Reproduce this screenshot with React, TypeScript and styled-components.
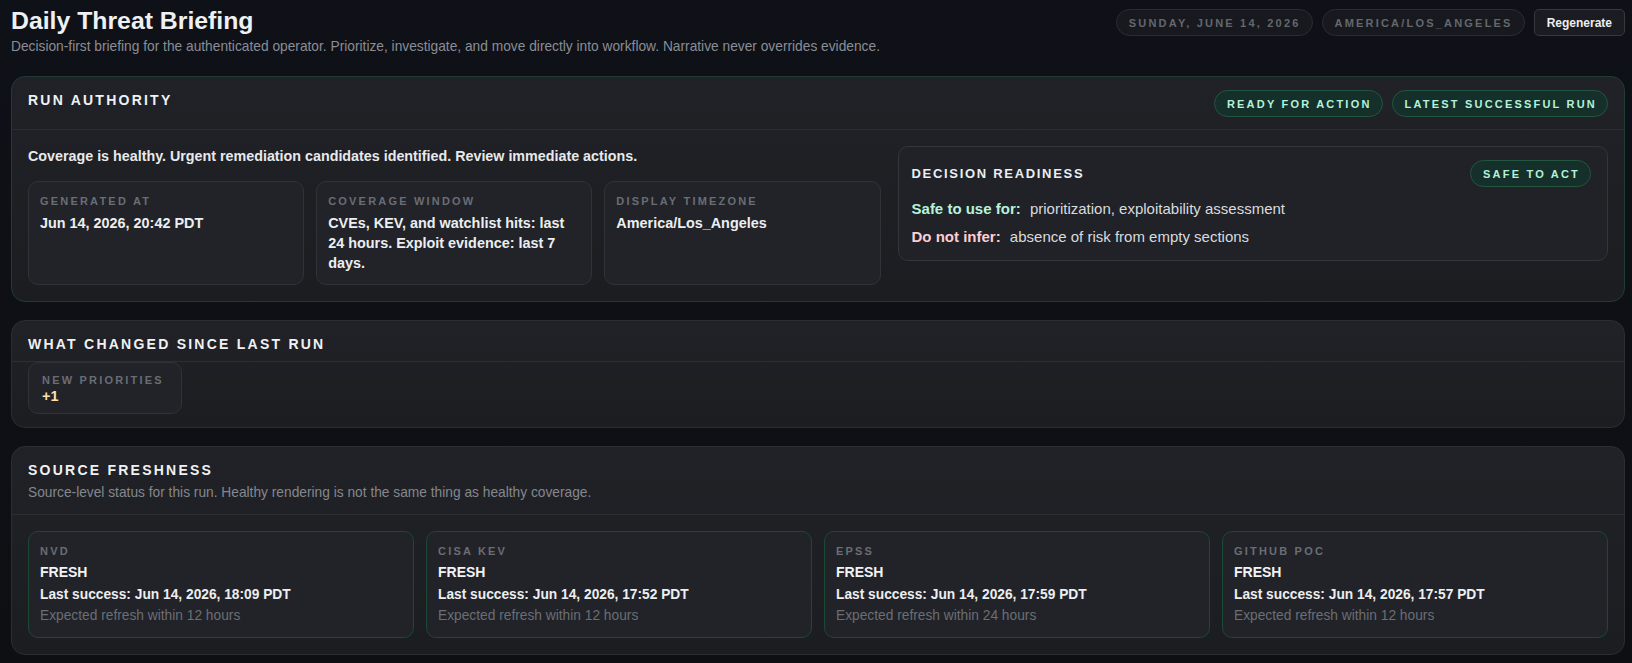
import React from 'react'
import styled, { createGlobalStyle } from 'styled-components'

const GlobalStyle = createGlobalStyle`
  html, body {
    margin: 0;
    padding: 0;
    background: #0e1015;
  }
  body {
    font-family: 'Liberation Sans', Arial, sans-serif;
    color: #e6e7ea;
  }
  * {
    box-sizing: border-box;
  }
`

const Page = styled.div`
  min-height: 663px;
  padding: 0 7px 12px 11px;
  background: linear-gradient(180deg, #0f1118 0%, #0d0f13 100%);
`

const Header = styled.header`
  display: flex;
  justify-content: space-between;
  align-items: flex-start;
  margin-bottom: 20px;
`

const TitleBlock = styled.div`
  padding-top: 7px;
`

const PageTitle = styled.h1`
  margin: 0;
  font-size: 24.8px;
  line-height: 28px;
  font-weight: 700;
  color: #eef0f3;
`

const PageSubtitle = styled.p`
  margin: 3px 0 0;
  font-size: 13.76px;
  line-height: 18px;
  color: #8a8d95;
`

const HeaderActions = styled.div`
  display: flex;
  align-items: center;
  gap: 9px;
  padding-top: 9px;
`

const Pill = styled.span`
  display: inline-flex;
  align-items: center;
  height: 27px;
  padding: 0 11px 0 12px;
  border-radius: 999px;
  border: 1px solid #2a2d34;
  background: #17191e;
  color: #64676e;
  font-size: 11px;
  font-weight: 700;
  letter-spacing: 0.2em;
`

const Button = styled.button`
  height: 27px;
  padding: 0 12px;
  border-radius: 5px;
  border: 1px solid #363940;
  background: #1a1c21;
  color: #eceef1;
  font-family: inherit;
  font-size: 12px;
  font-weight: 700;
`

const Stack = styled.div`
  display: flex;
  flex-direction: column;
  gap: 18px;
`

const Card = styled.section<{ $tone?: 'authority' | 'neutral' }>`
  border-radius: 14px;
  border: 1px solid ${(p) => (p.$tone === 'authority' ? '#1f3d33' : '#2b2d33')};
  background: linear-gradient(180deg, #202227 0%, #1b1d21 100%);
`

const CardHeader = styled.div<{ $pb?: number }>`
  display: flex;
  justify-content: space-between;
  align-items: flex-start;
  padding: 13px 16px ${(p) => p.$pb ?? 12}px;
  border-bottom: 1px solid #2c2e34;
`

const SectionTitle = styled.h2`
  margin: 0;
  font-size: 14px;
  line-height: 20px;
  font-weight: 700;
  letter-spacing: 0.16em;
  color: #f0f1f3;
`

const SectionNote = styled.p`
  margin: 3px 0 0;
  font-size: 13.76px;
  line-height: 20px;
  color: #84878f;
`

const BadgeRow = styled.div`
  display: flex;
  gap: 9px;
`

const Badge = styled.span`
  display: inline-flex;
  align-items: center;
  height: 27px;
  padding: 0 10px 0 12px;
  border-radius: 999px;
  border: 1px solid #24553f;
  background: #15302a;
  color: #b4f2d9;
  font-size: 11px;
  font-weight: 700;
  letter-spacing: 0.2em;
`

const CardBody = styled.div<{ $pt?: number; $pb?: number }>`
  padding: ${(p) => p.$pt ?? 16}px 16px ${(p) => p.$pb ?? 16}px;
`

const AuthorityGrid = styled.div`
  display: grid;
  grid-template-columns: 1.2fr 1fr;
  gap: 17px;
  align-items: start;
`

const Summary = styled.p`
  margin: 0 0 15px;
  font-size: 14.3px;
  line-height: 20px;
  font-weight: 700;
  color: #e8e9ec;
`

const MetricGrid = styled.div<{ $cols: number }>`
  display: grid;
  grid-template-columns: repeat(${(p) => p.$cols}, 1fr);
  gap: 12px;
`

const Tile = styled.div<{ $accent?: boolean }>`
  display: flex;
  flex-direction: column;
  padding: 12px 11px 11px;
  border-radius: 10px;
  border: 1px solid ${(p) => (p.$accent ? '#1d4834' : '#30323a')};
  background: #212328;
`

const Label = styled.div`
  font-size: 11px;
  line-height: 14px;
  font-weight: 700;
  letter-spacing: 0.2em;
  color: #6a6d75;
`

const Value = styled.div`
  margin-top: 5px;
  font-size: 14.4px;
  line-height: 20px;
  font-weight: 700;
  color: #eceef1;
`

const Readiness = styled.div`
  padding: 13px 16px 13px 13px;
  border-radius: 10px;
  border: 1px solid #33353c;
  background: #202227;
`

const ReadinessHead = styled.div`
  display: flex;
  justify-content: space-between;
  align-items: center;
  margin-bottom: 12px;
`

const ReadinessTitle = styled.h3`
  margin: 0;
  font-size: 13px;
  line-height: 20px;
  font-weight: 700;
  letter-spacing: 0.13em;
  color: #eceef1;
`

const ReadinessLine = styled.p`
  margin: 0;
  font-size: 15px;
  line-height: 20px;
  color: #d9dbdf;

  & + & {
    margin-top: 8px;
  }
`

const Key = styled.strong<{ $tone: 'safe' | 'warn' }>`
  margin-right: 5px;
  font-weight: 700;
  color: ${(p) => (p.$tone === 'safe' ? '#b6f3d9' : '#fecdd3')};
`

const DeltaTile = styled(Tile)`
  width: 154px;
  padding: 10px 13px 8px;
`

const DeltaValue = styled.div`
  font-size: 14.4px;
  line-height: 18px;
  font-weight: 700;
  color: #fde0a8;
`

const SourceStatus = styled.div`
  margin-top: 4px;
  font-size: 14px;
  line-height: 20px;
  font-weight: 700;
  color: #f2f3f5;
`

const SourceLine = styled.div<{ $muted?: boolean }>`
  margin-top: ${(p) => (p.$muted ? 1 : 3)}px;
  font-size: 13.76px;
  line-height: 20px;
  font-weight: ${(p) => (p.$muted ? 400 : 700)};
  color: ${(p) => (p.$muted ? '#6b6e75' : '#eceef1')};
`

const metrics = [
  { label: 'GENERATED AT', value: 'Jun 14, 2026, 20:42 PDT' },
  { label: 'COVERAGE WINDOW', value: 'CVEs, KEV, and watchlist hits: last 24 hours. Exploit evidence: last 7 days.' },
  { label: 'DISPLAY TIMEZONE', value: 'America/Los_Angeles' },
]

const sources = [
  { name: 'NVD', last: 'Jun 14, 2026, 18:09 PDT', window: '12 hours' },
  { name: 'CISA KEV', last: 'Jun 14, 2026, 17:52 PDT', window: '12 hours' },
  { name: 'EPSS', last: 'Jun 14, 2026, 17:59 PDT', window: '24 hours' },
  { name: 'GITHUB POC', last: 'Jun 14, 2026, 17:57 PDT', window: '12 hours' },
]

const App: React.FC = () => {
  return (
    <>
      <GlobalStyle />
      <Page>
        <Header>
          <TitleBlock>
            <PageTitle>Daily Threat Briefing</PageTitle>
            <PageSubtitle>
              Decision-first briefing for the authenticated operator. Prioritize, investigate, and move directly into
              workflow. Narrative never overrides evidence.
            </PageSubtitle>
          </TitleBlock>
          <HeaderActions>
            <Pill>SUNDAY, JUNE 14, 2026</Pill>
            <Pill>AMERICA/LOS_ANGELES</Pill>
            <Button type='button'>Regenerate</Button>
          </HeaderActions>
        </Header>

        <Stack>
          <Card $tone='authority'>
            <CardHeader $pb={12}>
              <SectionTitle>RUN AUTHORITY</SectionTitle>
              <BadgeRow>
                <Badge>READY FOR ACTION</Badge>
                <Badge>LATEST SUCCESSFUL RUN</Badge>
              </BadgeRow>
            </CardHeader>
            <CardBody>
              <AuthorityGrid>
                <div>
                  <Summary>Coverage is healthy. Urgent remediation candidates identified. Review immediate actions.</Summary>
                  <MetricGrid $cols={3}>
                    {metrics.map((m) => (
                      <Tile key={m.label}>
                        <Label>{m.label}</Label>
                        <Value>{m.value}</Value>
                      </Tile>
                    ))}
                  </MetricGrid>
                </div>
                <Readiness>
                  <ReadinessHead>
                    <ReadinessTitle>DECISION READINESS</ReadinessTitle>
                    <Badge>SAFE TO ACT</Badge>
                  </ReadinessHead>
                  <ReadinessLine>
                    <Key $tone='safe'>Safe to use for:</Key> prioritization, exploitability assessment
                  </ReadinessLine>
                  <ReadinessLine>
                    <Key $tone='warn'>Do not infer:</Key> absence of risk from empty sections
                  </ReadinessLine>
                </Readiness>
              </AuthorityGrid>
            </CardBody>
          </Card>

          <Card>
            <CardHeader $pb={7}>
              <SectionTitle>WHAT CHANGED SINCE LAST RUN</SectionTitle>
            </CardHeader>
            <CardBody $pt={0} $pb={13}>
              <DeltaTile>
                <Label>NEW PRIORITIES</Label>
                <DeltaValue>+1</DeltaValue>
              </DeltaTile>
            </CardBody>
          </Card>

          <Card>
            <CardHeader $pb={11}>
              <div>
                <SectionTitle>SOURCE FRESHNESS</SectionTitle>
                <SectionNote>
                  Source-level status for this run. Healthy rendering is not the same thing as healthy coverage.
                </SectionNote>
              </div>
            </CardHeader>
            <CardBody>
              <MetricGrid $cols={4}>
                {sources.map((s) => (
                  <Tile key={s.name} $accent>
                    <Label>{s.name}</Label>
                    <SourceStatus>FRESH</SourceStatus>
                    <SourceLine>Last success: {s.last}</SourceLine>
                    <SourceLine $muted>Expected refresh within {s.window}</SourceLine>
                  </Tile>
                ))}
              </MetricGrid>
            </CardBody>
          </Card>
        </Stack>
      </Page>
    </>
  )
}

export default App
